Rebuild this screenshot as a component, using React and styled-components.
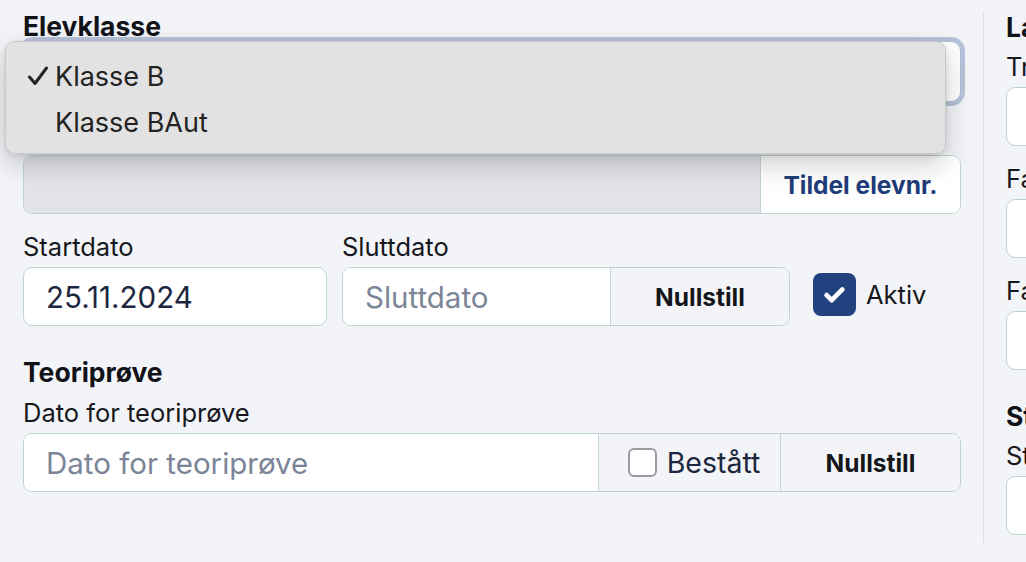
import React from 'react';
import styled, { createGlobalStyle } from 'styled-components';

const GlobalStyle = createGlobalStyle`
  body {
    margin: 0;
    background: #f3f4f8;
    font-family: Inter, "Noto Sans", sans-serif;
    color: #14161b;
  }
  * { box-sizing: border-box; }
`;

const Page = styled.div`
  display: flex;
  height: 562px;
  overflow: hidden;
  padding-left: 23px;
`;

const MainColumn = styled.div`
  width: 938px;
  flex-shrink: 0;
  padding-top: 11px;
  display: flex;
  flex-direction: column;
`;

const Divider = styled.div`
  width: 1px;
  flex-shrink: 0;
  background: #dcdfe4;
  margin: 12px 22px 19px 22px;
`;

const SideColumn = styled.div`
  width: 320px;
  flex-shrink: 0;
  padding-top: 12px;
  display: flex;
  flex-direction: column;
`;

const Heading = styled.h2`
  margin: 0 0 ${p => p.$gap ?? 11}px;
  font-size: 26.5px;
  line-height: 30px;
  font-weight: 700;
  color: #111318;
  white-space: nowrap;
`;

const Label = styled.label`
  display: block;
  font-size: 25.5px;
  line-height: 28px;
  margin-bottom: 6px;
  color: #16181d;
  white-space: nowrap;
`;

const Field = styled.div`
  display: flex;
  flex-direction: column;
  width: ${p => (p.$width ? `${p.$width}px` : 'auto')};
  margin-bottom: ${p => p.$gap ?? 19}px;
`;

const Row = styled.div`
  display: flex;
  align-items: flex-end;
  gap: 15px;
  margin-bottom: 31px;
`;

const TextInput = styled.input`
  height: 59px;
  width: 100%;
  border: 1px solid #bfd3d3;
  border-radius: 9px;
  background: #fff;
  padding: 0 22px;
  font-family: Inter, "Noto Sans", sans-serif;
  font-size: 29.5px;
  color: #1c2740;
  outline: none;
  &::placeholder { color: #7b8597; }
`;

const Group = styled.div`
  display: flex;
  height: 59px;
  border: 1px solid #bfd3d3;
  border-radius: 9px;
  overflow: hidden;
  background: #fff;
`;

const GroupInput = styled.input`
  flex: 1;
  min-width: 0;
  border: none;
  padding: 0 22px;
  font-family: Inter, "Noto Sans", sans-serif;
  font-size: 29.5px;
  color: #1c2740;
  outline: none;
  background: ${p => (p.disabled ? '#e2e4e8' : '#fff')};
  &::placeholder { color: #7b8597; }
`;

const AddonButton = styled.button`
  width: ${p => p.$width}px;
  flex-shrink: 0;
  border: none;
  border-left: 1px solid #c3d4da;
  background: ${p => (p.$light ? '#fff' : '#f3f4f8')};
  color: ${p => (p.$accent ? '#1f3d7a' : '#14161b')};
  font-family: Inter, "Noto Sans", sans-serif;
  font-size: 24.5px;
  font-weight: 700;
  cursor: pointer;
`;

const CheckAddon = styled.label`
  width: 182px;
  flex-shrink: 0;
  display: flex;
  align-items: center;
  justify-content: center;
  gap: 10px;
  padding-left: 9px;
  border-left: 1px solid #c3d4da;
  background: #f3f4f8;
  font-size: 28.5px;
  color: #1c2740;
`;

const Box = styled.span`
  display: inline-flex;
  align-items: center;
  justify-content: center;
  width: ${p => p.$size}px;
  height: ${p => p.$size}px;
  border-radius: ${p => (p.$checked ? 8 : 6)}px;
  background: ${p => (p.$checked ? '#21417f' : '#fff')};
  border: ${p => (p.$checked ? 'none' : '2px solid #9a9ba2')};
  flex-shrink: 0;
`;

const CheckField = styled.label`
  display: flex;
  align-items: center;
  gap: 10px;
  height: 59px;
  padding-bottom: 5px;
  margin-left: 8px;
  font-size: 25.5px;
  color: #17191e;
`;

const SelectWrap = styled.div`
  position: relative;
  height: 61px;
  margin-bottom: 19px;
`;

const SelectBox = styled.div`
  height: 61px;
  border: 1px solid #b2c0d6;
  border-radius: 10px;
  background: #fff;
  box-shadow: 0 0 0 4px #b7c3da;
  padding: 0 22px;
  display: flex;
  align-items: center;
  font-size: 29.5px;
  color: #1c2740;
`;

const Menu = styled.div`
  position: absolute;
  left: -18px;
  top: 0;
  width: 941px;
  height: 113px;
  padding-top: 11px;
  background: #e2e2e2;
  border: 1px solid #c9c9c9;
  border-radius: 10px;
  box-shadow: 0 10px 28px rgba(0, 0, 0, 0.2), 0 2px 6px rgba(0, 0, 0, 0.08);
  z-index: 2;
`;

const MenuItem = styled.div`
  display: flex;
  align-items: center;
  height: 46px;
  padding-left: 21px;
  font-family: Inter, "Noto Sans", sans-serif;
  font-size: 27px;
  color: #232323;
`;

const Tick = styled.span`
  width: 28px;
  display: inline-flex;
  align-items: center;
`;

const MenuTick = () => (
  <svg width="22" height="22" viewBox="0 0 22 22" fill="none">
    <path d="M2.5 12l5.5 6.5L19.5 3" stroke="#232323" strokeWidth="3" strokeLinecap="round" strokeLinejoin="round" />
  </svg>
);

const Check = () => (
  <svg width="27" height="27" viewBox="0 0 24 24" fill="none">
    <path d="M5 12.5l4.5 4.5L19 7.5" stroke="#fff" strokeWidth="4.2" strokeLinecap="round" strokeLinejoin="round" />
  </svg>
);

export default function App() {
  return (
    <>
      <GlobalStyle />
      <Page>
        <MainColumn>
          <Heading $gap={0}>Elevklasse</Heading>
          <SelectWrap>
            <SelectBox>Klasse B</SelectBox>
            <Menu>
              <MenuItem><Tick><MenuTick /></Tick>Klasse B</MenuItem>
              <MenuItem><Tick />Klasse BAut</MenuItem>
            </Menu>
          </SelectWrap>

          <Field>
            <Label>Elevnummer</Label>
            <Group>
              <GroupInput disabled />
              <AddonButton $width={200} $light $accent>Tildel elevnr.</AddonButton>
            </Group>
          </Field>

          <Row>
            <Field $width={304} $gap={0}>
              <Label>Startdato</Label>
              <TextInput readOnly value="25.11.2024" />
            </Field>
            <Field $width={448} $gap={0}>
              <Label>Sluttdato</Label>
              <Group>
                <GroupInput placeholder="Sluttdato" />
                <AddonButton $width={179}>Nullstill</AddonButton>
              </Group>
            </Field>
            <CheckField>
              <Box $size={43} $checked><Check /></Box>
              Aktiv
            </CheckField>
          </Row>

          <Heading $gap={12}>Teoriprøve</Heading>
          <Field>
            <Label>Dato for teoriprøve</Label>
            <Group>
              <GroupInput placeholder="Dato for teoriprøve" />
              <CheckAddon><Box $size={29} />Bestått</CheckAddon>
              <AddonButton $width={180}>Nullstill</AddonButton>
            </Group>
          </Field>
        </MainColumn>

        <Divider />

        <SideColumn>
          <Heading>Lapper</Heading>
          <Field>
            <Label>Trafikalt grunnkurs</Label>
            <TextInput />
          </Field>
          <Field>
            <Label>Faglærer</Label>
            <TextInput />
          </Field>
          <Field $gap={31}>
            <Label>Fagansvarlig</Label>
            <TextInput />
          </Field>
          <Heading>Status</Heading>
          <Field>
            <Label>Status</Label>
            <TextInput />
          </Field>
        </SideColumn>
      </Page>
    </>
  );
}
